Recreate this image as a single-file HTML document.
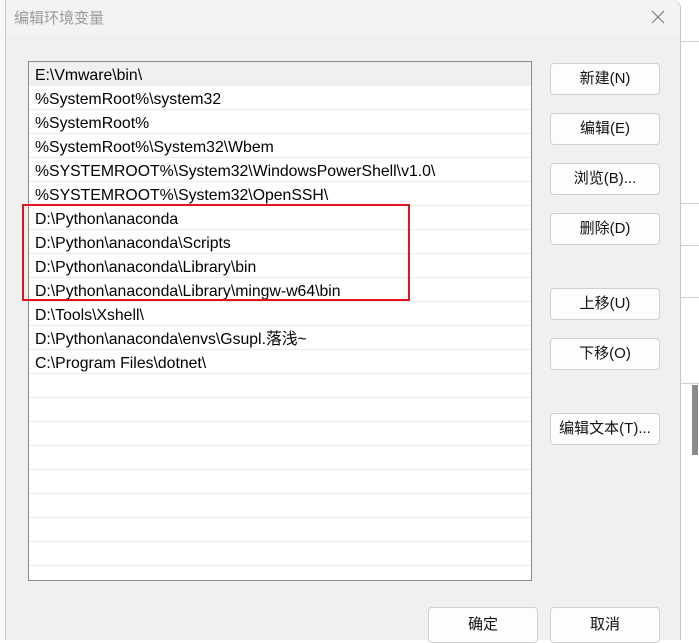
<!DOCTYPE html>
<html><head><meta charset="utf-8"><style>
body{margin:0;width:699px;height:640px;position:relative;overflow:hidden;background:#fff;font-family:"Liberation Sans","Noto Sans CJK SC",sans-serif;}
.dlg{position:absolute;left:5px;top:0;width:674px;height:640px;background:#f0f0f0;border-left:1px solid #c8c8c8;border-right:1px solid #c8c8c8;border-top-right-radius:8px;}
.title{position:absolute;left:0;top:0;right:0;height:35px;background:#f3f3f3;border-top-right-radius:8px;}
.title span{position:absolute;left:8px;top:7px;font-size:15px;color:#9a9a9a;}
.close{position:absolute;left:645px;top:10px;}
.list{position:absolute;left:28px;top:61px;width:502px;height:518px;background:#fff;border:1px solid #8a8a8a;overflow:hidden;}
.row{height:23px;border-bottom:1px solid #ececec;font-size:15.8px;line-height:27px;padding-left:6px;color:#000;white-space:nowrap;}
.row.sel{background:#f0f0f0;}
.btn{position:absolute;width:108px;height:30px;background:#fdfdfd;border:1px solid #d0d0d0;border-radius:4px;font-size:15px;text-align:center;line-height:30px;color:#111;}
.red{position:absolute;left:22px;top:204px;width:384px;height:93px;border:2px solid #e0141e;}
.rline{position:absolute;left:679px;width:20px;height:1px;background:#d0d0d0;}
</style></head><body>
<div style="position:absolute;left:0;top:0;width:5px;height:640px;background:#f7f7f7;border-right:1px solid #ddd"></div>
<div class="rline" style="top:41px"></div>
<div class="rline" style="top:203px"></div>
<div class="rline" style="top:245px"></div>
<div class="rline" style="top:297px"></div>
<div class="rline" style="top:383px"></div>
<div style="position:absolute;left:692px;top:385px;width:6px;height:70px;background:#8a8a8a"></div>
<div class="dlg">
<div class="title"><span>编辑环境变量</span>
<svg class="close" width="14" height="14" viewBox="0 0 14 14"><path d="M1 1L13 13M13 1L1 13" stroke="#777" stroke-width="1.1"/></svg></div>
</div>
<div class="list">
<div class="row sel">E:\Vmware\bin\</div>
<div class="row">%SystemRoot%\system32</div>
<div class="row">%SystemRoot%</div>
<div class="row">%SystemRoot%\System32\Wbem</div>
<div class="row">%SYSTEMROOT%\System32\WindowsPowerShell\v1.0\</div>
<div class="row">%SYSTEMROOT%\System32\OpenSSH\</div>
<div class="row">D:\Python\anaconda</div>
<div class="row">D:\Python\anaconda\Scripts</div>
<div class="row">D:\Python\anaconda\Library\bin</div>
<div class="row">D:\Python\anaconda\Library\mingw-w64\bin</div>
<div class="row">D:\Tools\Xshell\</div>
<div class="row">D:\Python\anaconda\envs\Gsupl.落浅~</div>
<div class="row">C:\Program Files\dotnet\</div>
<div class="row"></div><div class="row"></div><div class="row"></div><div class="row"></div><div class="row"></div><div class="row"></div><div class="row"></div><div class="row"></div><div class="row"></div><div class="row"></div>
</div>
<div class="red"></div>
<div class="btn" style="left:550px;top:63px">新建(N)</div>
<div class="btn" style="left:550px;top:113px">编辑(E)</div>
<div class="btn" style="left:550px;top:163px">浏览(B)...</div>
<div class="btn" style="left:550px;top:213px">删除(D)</div>
<div class="btn" style="left:550px;top:288px">上移(U)</div>
<div class="btn" style="left:550px;top:338px">下移(O)</div>
<div class="btn" style="left:550px;top:413px">编辑文本(T)...</div>
<div class="btn" style="left:428px;top:607px;height:34px;line-height:34px">确定</div>
<div class="btn" style="left:550px;top:607px;height:34px;line-height:34px">取消</div>
</body></html>
